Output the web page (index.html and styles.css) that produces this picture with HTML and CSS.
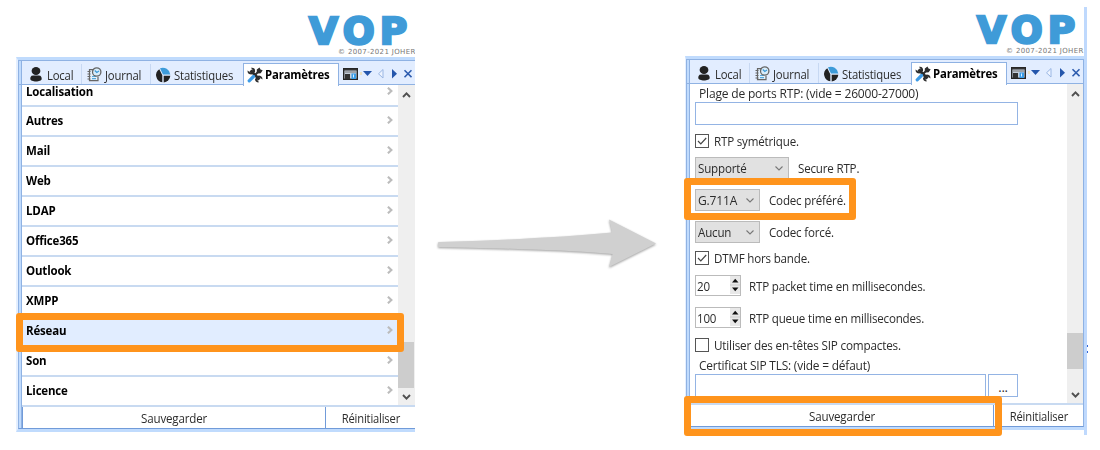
FILE: index.html
```html
<!DOCTYPE html>
<html lang="fr">
<head>
<meta charset="utf-8">
<title>VOP – Paramètres</title>
<link rel="stylesheet" href="styles.css">
</head>
<body>
<svg class="defs" width="0" height="0">
  <symbol id="user" viewBox="0 0 12 15"><ellipse cx="6" cy="4" rx="4.400" ry="4" fill="#222"/><path d="M.3 12c0-3 1.400-3.600 3-3.600h5.400c1.600 0 3 .6 3 3.600 0 3.300-11.400 3.300-11.400 0z" fill="#222"/></symbol>
  <symbol id="journal" viewBox="0 0 15 15"><path d="M6 2.700H2.500v11h8.500V10" fill="#e4f1fd" stroke="#666" stroke-width="1.200"/><path d="M.5 4.500h3M.5 7h3M.5 9.500h3M.5 12h3" stroke="#666" stroke-width="1"/><path d="M5 9.500h4M5 11.700h4" stroke="#55aade" stroke-width="1.200"/><circle cx="9.700" cy="5" r="4.200" fill="#d9edfb" stroke="#666" stroke-width="1.300"/><path d="M7.800 3.500l2 2L12 4" fill="none" stroke="#3f9bd8" stroke-width="1.200"/></symbol>
  <symbol id="pie" viewBox="0 0 16 16"><path d="M4.300 2.200L7.300 8.300V15.300A7.200 7.200 0 0 1 4.300 2.200z" fill="#222"/><path d="M8.700 8.800h6.600a7 7 0 0 1-6.600 6.600z" fill="#222"/><path d="M5 1.200a7.600 7.600 0 0 1 10.300 6.300H8z" fill="#3d9bd9"/></symbol>
  <symbol id="tools" viewBox="0 0 16 16"><path d="M3.500 3.500l9 9" stroke="#2d2d2d" stroke-width="3"/><path d="M.6 3.500l2.600 2L5.600 3 4 .8c3-.5 4.500 1.200 4 4.200L4.500 7.500C2 7.500.2 6 .6 3.500zM15.400 12.500l-2.600-2L10.400 13l1.600 2.300c-3 .5-4-1.300-4-3.300L11.500 8.500c2.500 0 4.300 1.500 3.900 4z" fill="#2d2d2d"/><path d="M8 8l3.800-3.800" stroke="#2d2d2d" stroke-width="2"/><path d="M9.800 2.600L12.500.5l1 2 2.200.8-2 3-2.200.3-1.700-1.700z" fill="#2d2d2d"/><path d="M2.200 13.800L6.500 9.500" stroke="#3d9be6" stroke-width="3.200" stroke-linecap="round"/></symbol>
  <symbol id="window" viewBox="0 0 15 12"><rect x=".7" y=".7" width="13.600" height="10.600" fill="#c4cedb" stroke="#252525" stroke-width="1.400"/><path d="M1 1.700h13" stroke="#333" stroke-width="1.600"/><path d="M2 4h11" stroke="#777" stroke-width="1"/><path d="M2 6h5v5H2z" fill="#333"/><path d="M8.500 5.500H13V11H8.500z" fill="#3a9ce8"/><path d="M10.500 6.500v3" stroke="#d9efff"/></symbol>
  <symbol id="nav" viewBox="0 0 52 12"><path d="M1 4v3" stroke="#f5d788"/><path d="M3 3h9L7.500 8z" fill="#2456ac"/><path d="M23 1.500v8.500L18.500 5.800z" fill="#eef4ff" stroke="#9ab7e4"/><path d="M32 1v9.500L37 5.700z" fill="#2456ac"/><path d="M44.500 2.200l7 7M51.500 2.200l-7 7" stroke="#2d5caf" stroke-width="1.600"/></symbol>
  <symbol id="chev" viewBox="0 0 6 8"><path d="M.9.700L4.400 4 .9 7.300" fill="none" stroke="#bcbcbc" stroke-width="2.100"/></symbol>
  <symbol id="down" viewBox="0 0 8 5"><path d="M.5.500L4 4 7.500.500" fill="none" stroke="#777" stroke-width="1.100"/></symbol>
  <symbol id="scrollup" viewBox="0 0 9 6"><path d="M1 5l3.500-3.600L8 5" fill="none" stroke="#505050" stroke-width="1.900"/></symbol>
  <symbol id="scrolldown" viewBox="0 0 9 6"><path d="M1 1l3.500 3.600L8 1" fill="none" stroke="#505050" stroke-width="1.900"/></symbol>
  <symbol id="tick" viewBox="0 0 12 12"><path d="M2 6l2.800 2.800L10.200 3" fill="none" stroke="#444" stroke-width="1.200"/></symbol>
  <symbol id="spin" viewBox="0 0 10 18"><path d="M0 0h10v18H0z" fill="#e8e8e8"/><path d="M0 9h10" stroke="#ccc"/><path d="M2 6.500h6.500L5.200 2.800zM2 11.500h6.500L5.200 15.200z" fill="#111"/></symbol>
</svg>

<main class="page">
  <section class="shot left">
    <header class="brand"><div class="logo">VOP</div><div class="copy">© 2007-2021 JOHER</div></header>
    <div class="frame">
      <nav class="tabs">
        <div class="tab t1"><svg width="12" height="15"><use href="#user"/></svg><span>Local</span></div>
        <div class="tab t2"><svg width="15" height="15"><use href="#journal"/></svg><span>Journal</span></div>
        <div class="tab t3"><svg width="16" height="16"><use href="#pie"/></svg><span>Statistiques</span></div>
        <div class="tab active"><svg width="16" height="16"><use href="#tools"/></svg><span>Paramètres</span></div>
        <div class="tools"><svg width="15" height="12"><use href="#window"/></svg><svg width="52" height="12"><use href="#nav"/></svg></div>
      </nav>
      <div class="body">
        <ul class="list">
          <li class="first"><span>Localisation</span><svg width="6" height="8"><use href="#chev"/></svg></li>
          <li><span>Autres</span><svg width="6" height="8"><use href="#chev"/></svg></li>
          <li><span>Mail</span><svg width="6" height="8"><use href="#chev"/></svg></li>
          <li><span>Web</span><svg width="6" height="8"><use href="#chev"/></svg></li>
          <li><span>LDAP</span><svg width="6" height="8"><use href="#chev"/></svg></li>
          <li><span>Office365</span><svg width="6" height="8"><use href="#chev"/></svg></li>
          <li><span>Outlook</span><svg width="6" height="8"><use href="#chev"/></svg></li>
          <li><span>XMPP</span><svg width="6" height="8"><use href="#chev"/></svg></li>
          <li class="selected"><span>Réseau</span><svg width="6" height="8"><use href="#chev"/></svg></li>
          <li><span>Son</span><svg width="6" height="8"><use href="#chev"/></svg></li>
          <li><span>Licence</span><svg width="6" height="8"><use href="#chev"/></svg></li>
        </ul>
        <div class="scroll"><svg width="9" height="6"><use href="#scrollup"/></svg><div class="thumb"></div><svg width="9" height="6"><use href="#scrolldown"/></svg></div>
      </div>
      <footer class="actions"><div class="save"><span>Sauvegarder</span></div><div class="reset"><span>Réinitialiser</span></div></footer>
    </div>
    <div class="mark mark-row"></div>
  </section>

  <svg class="arrow" width="230" height="60" viewBox="0 0 230 60">
    <path d="M8 28.500Q8 28 10 28L50 26.700Q130 23.500 182 18.500L179 5.500 226 29.500 179 53 182.500 40Q130 36 70 34.500L8 33z" fill="#d0d0d0"/>
  </svg>

  <section class="shot right">
    <header class="brand"><div class="logo">VOP</div><div class="copy">© 2007-2021 JOHER</div></header>
    <div class="frame">
      <nav class="tabs">
        <div class="tab t1"><svg width="12" height="15"><use href="#user"/></svg><span>Local</span></div>
        <div class="tab t2"><svg width="15" height="15"><use href="#journal"/></svg><span>Journal</span></div>
        <div class="tab t3"><svg width="16" height="16"><use href="#pie"/></svg><span>Statistiques</span></div>
        <div class="tab active"><svg width="16" height="16"><use href="#tools"/></svg><span>Paramètres</span></div>
        <div class="tools"><svg width="15" height="12"><use href="#window"/></svg><svg width="52" height="12"><use href="#nav"/></svg></div>
      </nav>
      <div class="body">
        <div class="form">
          <div class="caption c1"><span>Plage de ports RTP: (vide = 26000-27000)</span></div>
          <div class="input wide"></div>
          <div class="check k1"><i class="box"><svg width="12" height="12"><use href="#tick"/></svg></i><span>RTP symétrique.</span></div>
          <div class="pick"><div class="select large"><span>Supporté</span><svg width="8" height="5"><use href="#down"/></svg></div><span>Secure RTP.</span></div>
          <div class="pick"><div class="select"><span class="roomy">G.711A</span><svg width="8" height="5"><use href="#down"/></svg></div><span>Codec préféré.</span></div>
          <div class="pick last"><div class="select"><span>Aucun</span><svg width="8" height="5"><use href="#down"/></svg></div><span>Codec forcé.</span></div>
          <div class="check k2"><i class="box"><svg width="12" height="12"><use href="#tick"/></svg></i><span>DTMF hors bande.</span></div>
          <div class="number"><div class="spinner"><span>20</span><svg width="10" height="18"><use href="#spin"/></svg></div><span>RTP packet time en millisecondes.</span></div>
          <div class="number"><div class="spinner"><span>100</span><svg width="10" height="18"><use href="#spin"/></svg></div><span>RTP queue time en millisecondes.</span></div>
          <div class="check k3"><i class="box"></i><span>Utiliser des en-têtes SIP compactes.</span></div>
          <div class="caption c2"><span>Certificat SIP TLS: (vide = défaut)</span></div>
          <div class="file"><div class="input"></div><div class="browse">...</div></div>
        </div>
        <div class="scroll"><svg width="9" height="6"><use href="#scrollup"/></svg><div class="thumb"></div><svg width="9" height="6"><use href="#scrolldown"/></svg></div>
      </div>
      <footer class="actions"><div class="save"><span>Sauvegarder</span></div><div class="reset"><span>Réinitialiser</span></div></footer>
    </div>
    <div class="edge"></div>
    <div class="dots"></div>
    <div class="mark mark-codec"></div>
    <div class="mark mark-save"></div>
  </section>
</main>
</body>
</html>
```
FILE: styles.css
```css
* { box-sizing: border-box; }
body { margin: 0; background: #fff; font: 13px/18px "Open Sans", "Noto Sans", sans-serif; color: #2c2c2c; letter-spacing: -0.200px; overflow: hidden; }
svg { display: block; flex: none; }
.defs { position: absolute; }
.page { display: flex; width: 1100px; height: 450px; padding-left: 16px; align-items: flex-start; }
.shot { position: relative; }
.left { width: 399px; overflow: hidden; height: 450px; }
.right { width: 402px; margin-left: 24px; height: 450px; }
.arrow { margin: 214px 1px 0 15px; filter: drop-shadow(0 1.500px 1px rgba(0,0,0,.38)); }

/* condensed labels */
.frame span { display: inline-block; transform: scaleX(.89); transform-origin: 0 50%; white-space: nowrap; }
.tab span { transform: scaleX(.87); }
.list span { font-size: 12.500px; transform: scaleX(.92); }
.active span { font-size: 12.500px; transform: scaleX(.91); }
.frame .roomy { transform: scaleX(.93); }
.c1 span { transform: scaleX(.925); }
.c2 span { transform: scaleX(.915); }
.k3 span { transform: scaleX(.9); }
.actions span { transform-origin: 50% 50%; }
.reset span { transform: scaleX(.86); }

.brand { height: 57px; padding-top: 13px; white-space: nowrap; overflow: hidden; }
.logo { font: bold 37.500px/37px "DejaVu Sans", sans-serif; letter-spacing: 5.300px; color: #3f9bd8; -webkit-text-stroke: 2.500px #3f9bd8; padding-left: 293px; height: 35px; }
.copy { font: 7px/9px "DejaVu Sans", sans-serif; letter-spacing: 0.350px; color: #777; padding-left: 322px; }
.right .brand { height: 49px; margin-top: 7px; padding-top: 5px; border-right: 3px solid #bfd9fd; }
.right .logo { padding-left: 292px; }
.right .copy { padding-left: 321px; }

.frame { border-top: 3px solid #c0dbfd; border-bottom: 3px solid #c0dbfd; border-left: 2px solid #e4efff; }
.right .frame { border-right: 3px solid #bfd9fd; border-left-width: 1px; }
.frame > * { border-left: 1px solid #8fb2e3; box-shadow: inset 2px 0 #c0dbfd, inset 3px 0 #8fb2e3; padding-left: 3px; }
.right .frame > * { border-right: 1px solid #8fb2e3; }

.tabs { height: 25px; display: flex; background: #e2edff; border-top: 1px solid #8fb2e3; border-bottom: 1px solid #8fb2e3; }
.tab { display: flex; align-items: center; flex: none; height: 20px; margin-top: 3px; padding-top: 1px; border-right: 1px solid #c7d8f2; white-space: nowrap; }
.t1 { width: 60px; padding-left: 8px; gap: 5px; }
.t2 { width: 69px; padding-left: 5px; gap: 3px; }
.t3 { width: 92px; padding-left: 4px; gap: 3px; border-right: 0; }
.active { width: 96px; height: 23px; margin: 2px 0 -2px; background: #fff; border: 1px solid #8fb2e3; border-bottom: 0; font-weight: 700; color: #000; padding: 0 0 1px 3px; gap: 2px; }
.tools { display: flex; gap: 2px; padding: 7px 0 0 4px; }

.body { display: flex; height: 322px; }
.right .body { height: 321px; }
.list { list-style: none; margin: 0; padding: 0; width: 377px; font-weight: 700; color: #000; }
.list li { height: 30px; border-bottom: 2px solid #c8daf1; display: flex; align-items: center; justify-content: space-between; padding: 0 5px 0 4px; }
.list .first { height: 22px; padding-bottom: 7px; }
.list svg { margin-top: -2px; }
.list .selected { background: #e1edff; }
.scroll { width: 16px; background: #efefef; display: flex; flex-direction: column; align-items: center; padding: 7px 0 5px; border-bottom: 2px solid #c8daf1; }
.left .scroll { width: 17px; padding-right: 1px; }
.thumb { width: 16px; flex: none; background: #cdcdcd; height: 46px; margin: auto 0 6px; }
.right .thumb { height: 36px; margin-bottom: 23px; }

.actions { display: flex; height: 22px; border-bottom: 1px solid #719bd9; background: #fff; }
.actions > div { height: 21px; display: flex; align-items: center; justify-content: center; padding-top: 1px; white-space: nowrap; }
.save { width: 304px; border-left: 1px solid #719bd9; border-right: 1px solid #719bd9; }
.reset { flex: 1; }

.form { width: 377px; padding-left: 5px; white-space: nowrap; border-bottom: 2px solid #c8daf1; }
.caption { padding-left: 4px; height: 18px; }
.c2 { height: 17px; line-height: 17px; }
.input, .browse { height: 23px; border: 1px solid #94b4e4; background: #fff; }
.wide { width: 323px; }
.check { display: flex; align-items: center; gap: 5px; }
.k1 { height: 32px; }
.k2 { height: 30px; margin-bottom: 2px; }
.k3 { height: 24px; margin-top: -6px; }
.box { width: 14px; height: 14px; border: 1px solid #555; display: block; }
.pick { display: flex; height: 32px; gap: 10px; line-height: 22px; }
.pick.last { height: 22px; }
.select { width: 65px; height: 22px; border: 1px solid #bbb; background: #e1e1e1; display: flex; align-items: center; justify-content: space-between; padding: 0 5px 0 2px; line-height: 20px; }
.pick > span { margin-left: -1px; }
.select.large { width: 94px; }
.number { display: flex; height: 32px; line-height: 22px; gap: 8px; }
.spinner { width: 46px; height: 21px; border: 1px solid #bbb; display: flex; justify-content: space-between; padding-left: 1px; line-height: 20px; }
.file { display: flex; gap: 2px; }
.file .input { width: 291px; }
.browse { width: 30px; text-align: center; line-height: 25px; }

.edge { position: absolute; right: 0; top: 430px; width: 3px; height: 5px; background: #bfd9fd; }
.dots { position: absolute; left: 402px; top: 345px; width: 1px; height: 8px; border-top: 2px solid #3566d8; border-bottom: 2px solid #3566d8; }
.mark { position: absolute; border: 7px solid #ff941c; border-radius: 3px; }
.mark-row { left: 0; top: 313px; width: 388px; height: 39px; }
.mark-codec { left: -1px; top: 178px; width: 172px; height: 42px; }
.mark-save { left: -1px; top: 396px; width: 318px; height: 40px; border-width: 7px; }
```
